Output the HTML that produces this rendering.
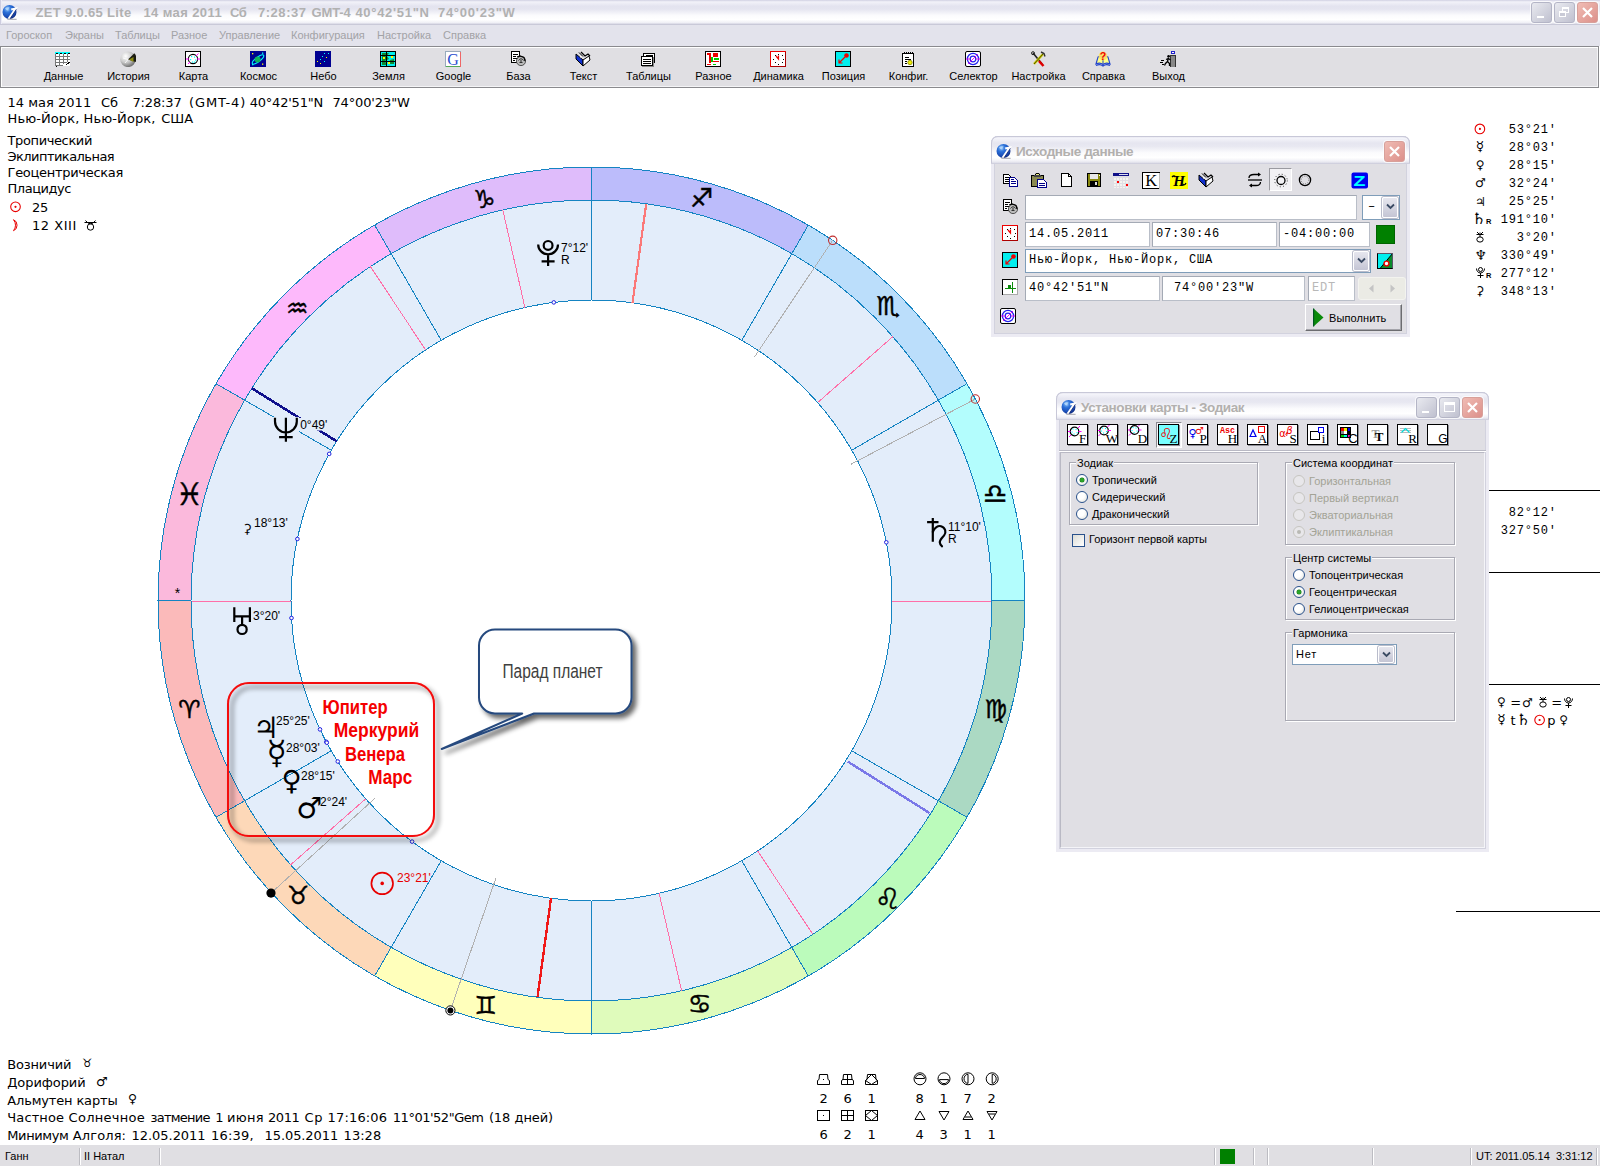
<!DOCTYPE html><html lang="ru"><head><meta charset="utf-8"><title>ZET 9.0.65 Lite</title><style>*{box-sizing:border-box;margin:0;padding:0}
html,body{width:1600px;height:1166px;overflow:hidden;background:#fff}
body{position:relative;font-family:"Liberation Sans","DejaVu Sans",sans-serif;font-size:11px;color:#000}
#title{position:absolute;left:0;top:0;width:1600px;height:25px;box-shadow:inset 1px 0 0 #cdcde0,inset 2px 0 0 #ececf6;background:linear-gradient(#d0d0e2 0,#f2f2f9 8%,#e3e3ef 26%,#e5e5f0 38%,#fbfbfd 64%,#fff 82%,#f0f0f6 94%,#d6d6e3 100%);border-bottom:1px solid #c9c9d8}
#title .tico{position:absolute;left:0;top:0}
#title .ttxt{position:absolute;top:5px;font:bold 13px "Liberation Sans",sans-serif;color:#b1b1b1;white-space:pre;letter-spacing:0px;transform-origin:0 0}
.wb{position:absolute;top:2px;width:21px;height:21px;border:1px solid #b4b5c6;border-radius:3px;background:linear-gradient(135deg,#e9eaf0,#bfc0cf);box-shadow:0 0 0 1px rgba(255,255,255,.7)}
.wb.cl{background:linear-gradient(135deg,#f0bcb4,#dc908a);border-color:#d8a09a}
.wb.cl svg{position:absolute;left:-1px;top:-1px}
#menu{position:absolute;left:0;top:25px;width:1600px;height:21px;background:#e3e3ec}
#menu span{position:absolute;top:4px;color:#a2a2a6;font-size:11px;white-space:pre}
#tool{position:absolute;left:0;top:46px;width:1599px;height:42px;background:#e0dfe3;border:1px solid #8a8a8e;box-shadow:1px 1px 0 #fff inset,-1px -1px 0 #f4f4f6 inset}
#tool .tb{position:absolute;top:0;margin-left:-1px;width:65px;height:40px;text-align:center}
#tool .tb svg{position:absolute;left:24px;top:4px}
#tool .tb span{position:absolute;left:-10px;width:85px;top:23px;font-size:11px;text-align:center;white-space:pre}
#status{position:absolute;left:0;top:1145px;width:1600px;height:21px;background:#e0dfe3}
#status span{position:absolute;top:5px;font-size:11px;white-space:pre}
#status i{position:absolute;top:3px;width:2px;height:17px;border-left:1px solid #bcbcc2;border-right:1px solid #fff}
#status b{position:absolute;top:4px;width:15px;height:15px;background:#008000}
.vt{position:absolute;font:13px "DejaVu Sans","Liberation Sans",sans-serif;white-space:pre;line-height:16px;color:#000}
.mono{position:absolute;font:12px "Liberation Mono","DejaVu Sans Mono",monospace;letter-spacing:.8px;white-space:pre}
.sym{font-family:"DejaVu Sans",sans-serif}
#chart{position:absolute;left:0;top:88px}
.ln{left:0;width:700px;height:16px}.ln span{position:absolute;top:0;white-space:pre}
.dlg{position:absolute;background:#e0dfe4;border-radius:7px 7px 0 0}
.dlg .frame{position:absolute;left:0;top:0;right:0;bottom:0;border:3px solid #ecebf3;border-top:0;border-radius:7px 7px 0 0;box-shadow:inset 0 0 0 1px #d2d2de, 0 0 0 1px #c6c6d4 inset}
.dlg .dt{position:absolute;left:0;top:0;right:0;height:28px;border-radius:7px 7px 0 0;box-shadow:inset 0 1px 0 #c8c8d8,inset 1px 0 0 #c8c8d8,inset -1px 0 0 #c8c8d8;background:linear-gradient(#dcdce8 0,#f4f4fa 8%,#e6e6f0 26%,#e8e8f1 38%,#fbfbfd 62%,#fff 80%,#f0f0f6 93%,#dcdce8 100%);border-bottom:1px solid #d0d0de}
.dlg .dt .cap{position:absolute;left:25px;top:8px;font:bold 13.5px "Liberation Sans",sans-serif;color:#b2b0ae;white-space:pre;letter-spacing:-0.4px}
.dlg .dt .tico{position:absolute;left:3px;top:3px}
.dlg .wb{width:21px;height:21px}
.inp{position:absolute;background:#fff;border:1px solid #a4aab5;border-right-color:#b9bec8;border-bottom-color:#b9bec8;font:12px "Liberation Mono","DejaVu Sans Mono",monospace;letter-spacing:.8px;white-space:pre;padding-left:3px;color:#000;overflow:hidden}
.cbtn{position:absolute;width:16px;background:linear-gradient(#e6e6ee,#c4c5d4);border:1px solid #fff;border-radius:2px;box-shadow:0 0 0 1px #b9bccb}
.cbtn svg{position:absolute;left:3px;top:5px}
.pbtn{position:absolute;background:#e0dfe4;border:1px solid #fff;border-right-color:#6c6c70;border-bottom-color:#6c6c70;box-shadow:inset -1px -1px 0 #a4a4aa}
.ib{position:absolute;width:16px;height:16px}
.grp{position:absolute;border:1px solid #a9a9b3;box-shadow:1px 1px 0 #fff, inset 1px 1px 0 #fff}
.grp>em{position:absolute;left:6px;top:-6px;background:#e0dfe4;padding:0 1px;font-style:normal;font-size:11px;line-height:13px;white-space:pre}
.rad{position:absolute;width:12px;height:12px;border-radius:50%;border:1px solid #29518c;background:radial-gradient(circle at 35% 35%,#fff 40%,#dcdcd6)}
.rad.on::after{content:"";position:absolute;left:3px;top:3px;width:4px;height:4px;border-radius:50%;background:#2aa52a;box-shadow:0 0 0 0.5px #1a7a1a}
.rad.dis{border-color:#c6c5c0;background:#e8e7ea}
.rad.dis.on::after{background:#b9b9b4;box-shadow:none}
.lb{position:absolute;font-size:11px;line-height:13px;white-space:pre}
.lb.dis{color:#a3a396}
.tbt{position:absolute;top:32px;width:21px;height:21px;background:#fff;border:1px solid #000;box-shadow:1px 1px 0 #8f8f96}
.tbt svg{position:absolute;left:0;top:0}
.tbt.on{background:#7ff}
</style></head><body><div id="title"><svg class="tico" width="20" height="22" viewBox="0 0 20 22"><defs><radialGradient id="GLB" cx="35%" cy="28%" r="80%"><stop offset="0" stop-color="#8cc0f6"/><stop offset="0.35" stop-color="#2a6fd8"/><stop offset="0.75" stop-color="#1848b0"/><stop offset="1" stop-color="#0a2070"/></radialGradient></defs><circle cx="9.5" cy="12" r="7" fill="url(#GLB)"/><path d="M5 8.5Q7 6.5 9.5 7.5Q8 9 8.5 10.5Q6.5 11 5 8.5Z" fill="#b8dcff" opacity=".8"/><path d="M11.2 9.6L15.6 8.6L8.6 18.9" fill="none" stroke="#fff" stroke-width="2.1" stroke-linejoin="miter"/><path d="M16.4 9.3L10 18.8" stroke="#0a1a60" stroke-width="0.9" opacity=".8"/><path d="M7.4 19.3H16.6" stroke="#9a9aa4" stroke-width="0.9"/></svg><span class="ttxt" style="left:35.4px;letter-spacing:0.34px">ZET 9.0.65 Lite</span> <span class="ttxt" style="left:143.4px;letter-spacing:0.41px">14 мая 2011</span> <span class="ttxt" style="left:229.9px;letter-spacing:-0.27px">Сб</span> <span class="ttxt" style="left:257.9px;letter-spacing:0.56px">7:28:37</span> <span class="ttxt" style="left:311.4px;letter-spacing:-0.10px">GMT-4</span> <span class="ttxt" style="left:355.4px;letter-spacing:0.70px">40°42'51"N</span> <span class="ttxt" style="left:437.9px;letter-spacing:0.76px">74°00'23"W</span>
<div class="wb" style="left:1531px"><i style="position:absolute;left:5px;top:13px;width:7px;height:2px;background:#fff;border:0"></i></div>
<div class="wb" style="left:1554px"><i style="position:absolute;left:7px;top:4px;width:7px;height:6px;border:1px solid #fff;border-top-width:2px"></i><i style="position:absolute;left:4px;top:8px;width:7px;height:6px;border:1px solid #fff;border-top-width:2px;background:#c9cad6"></i></div>
<div class="wb cl" style="left:1577px"><svg width="21" height="21" viewBox="0 0 21 21"><path d="M6 6L15 15M15 6L6 15" stroke="#fff" stroke-width="2.2"/></svg></div>
</div>
<div id="menu"><span style="left:6px">Гороскоп</span> <span style="left:65px">Экраны</span> <span style="left:115px">Таблицы</span> <span style="left:171px">Разное</span> <span style="left:219px">Управление</span> <span style="left:291px">Конфигурация</span> <span style="left:377px">Настройка</span> <span style="left:443px">Справка</span></div>
<div id="tool">
<div class="tb" style="left:31px"><svg width="16" height="16" viewBox="0 0 16 16"><g shape-rendering="crispEdges"><rect x="0" y="1" width="15" height="14" fill="#fff"/><rect x="0" y="1" width="15" height="2" fill="#0ff"/><path d="M0.5 3V15M4.5 3V15M8.5 3V13M12.5 3V11M0 5.5H15M0 8.5H15M0 11.5H12M0 14.5H8" stroke="#777" fill="none"/><path d="M1 2.5H3M5 2.5H7M9 2.5H11M13 2.5H15" stroke="#000"/><path d="M11 14L13 12.5L15 11" stroke="#000" fill="none"/><rect x="1" y="15" width="1" height="1" fill="#000"/></g></svg><span>Данные</span></div>
<div class="tb" style="left:96px"><svg width="16" height="16" viewBox="0 0 16 16"><defs><radialGradient id="sph" cx="35%" cy="30%" r="75%"><stop offset="0" stop-color="#fff"/><stop offset="0.55" stop-color="#c8c8c8"/><stop offset="1" stop-color="#666"/></radialGradient></defs><circle cx="8" cy="8.3" r="7.8" fill="url(#sph)"/><path d="M8 8.5L14.4 2.3A8 8 0 0 1 15.6 11Z" fill="#1a1a10"/><path d="M9 8.5L13.5 6V11Z" fill="#8a8a10"/><path d="M3 7L8 8.5L5 12" stroke="#fff" stroke-width="0.8" fill="none"/></svg><span>История</span></div>
<div class="tb" style="left:161px"><svg width="16" height="16" viewBox="0 0 16 16"><rect x="0.5" y="0.5" width="15" height="15" fill="#fff" stroke="#000" shape-rendering="crispEdges"/><circle cx="8" cy="8" r="4.6" fill="none" stroke="#000" stroke-width="1.1"/><path d="M1 8H4M12 8H15M3 13L5 11M11 5L13.5 2.5" stroke="#f0f" stroke-width="1"/><g fill="#0ff"><rect x="6" y="5" width="1.2" height="1.2"/><rect x="9" y="5.5" width="1.2" height="1.2"/><rect x="5" y="8" width="1.2" height="1.2"/><rect x="10" y="8.5" width="1.2" height="1.2"/><rect x="7" y="10.5" width="1.2" height="1.2"/><rect x="9" y="10.5" width="1.2" height="1.2"/></g></svg><span>Карта</span></div>
<div class="tb" style="left:226px"><svg width="16" height="16" viewBox="0 0 16 16"><rect x="0" y="0" width="16" height="16" fill="#000090" shape-rendering="crispEdges"/><ellipse cx="8" cy="8.5" rx="7" ry="2.2" transform="rotate(-38 8 8.5)" fill="none" stroke="#0ff" stroke-width="1.1"/><circle cx="7.6" cy="8.6" r="3" fill="#10b060"/><g fill="#ff0"><rect x="2" y="2" width="1.3" height="1.3"/><rect x="12" y="12.5" width="1.3" height="1.3"/></g><g fill="#0ff"><rect x="12" y="1.5" width="1.3" height="1.3"/><rect x="2" y="13" width="1.3" height="1.3"/></g></svg><span>Космос</span></div>
<div class="tb" style="left:291px"><svg width="16" height="16" viewBox="0 0 16 16"><rect x="0" y="0" width="16" height="16" fill="#000090" shape-rendering="crispEdges"/><g fill="#0ff" shape-rendering="crispEdges"><rect x="9" y="2" width="1" height="1"/><rect x="13" y="2" width="1" height="1"/><rect x="7" y="5" width="1" height="1"/><rect x="5" y="8" width="1" height="1"/><rect x="9" y="10" width="1" height="1"/></g><g fill="#ff0" shape-rendering="crispEdges"><rect x="2" y="10" width="1" height="1"/><rect x="5" y="12" width="1" height="1"/><rect x="11" y="6" width="1" height="1"/></g></svg><span>Небо</span></div>
<div class="tb" style="left:356px"><svg width="16" height="16" viewBox="0 0 16 16"><rect x="0.5" y="0.5" width="15" height="15" fill="#0ee" stroke="#000" shape-rendering="crispEdges"/><path d="M2 2H9L7 5L9 8L5 10L7 14H2Z" fill="#108a30"/><path d="M10 9L14 8V13H9Z" fill="#108a30"/><path d="M1 4.5H15M1 10.5H15M6.5 1V15" stroke="#000" stroke-width="1" shape-rendering="crispEdges"/><g fill="#ff0"><rect x="3" y="6" width="2" height="2"/><rect x="8" y="11" width="2" height="2"/><rect x="11" y="5" width="2" height="2"/></g></svg><span>Земля</span></div>
<div class="tb" style="left:421px"><svg width="16" height="16" viewBox="0 0 16 16"><rect x="0.5" y="0.5" width="15" height="15" fill="#fff" stroke="#9ab" shape-rendering="crispEdges"/><path d="M0.5 15.5H15.5" stroke="#5a5" shape-rendering="crispEdges"/><path d="M15.5 0.5V15.5" stroke="#e66" shape-rendering="crispEdges"/><text x="8" y="13.5" text-anchor="middle" font-family="Liberation Serif" font-size="16" fill="#2a4fd0">G</text></svg><span>Google</span></div>
<div class="tb" style="left:486px"><svg width="16" height="16" viewBox="0 0 16 16"><g shape-rendering="crispEdges"><path d="M1.5 0.5H9.5V11.5H1.5Z" fill="#fff" stroke="#000"/><path d="M3 3H8M3 5H6M3 7H8M3 9H5" stroke="#000"/></g><circle cx="11" cy="10" r="4.6" fill="#bbb" stroke="#333" stroke-width="0.8"/><path d="M8.5 9.5Q11 6 13.5 9.5M9.5 11.5H12.5M11 9V11" stroke="#222" fill="none" stroke-width="0.9"/><path d="M7 6L10 5L14 6.5L15 10" fill="none" stroke="#000" stroke-width="1.2"/></svg><span>База</span></div>
<div class="tb" style="left:551px"><svg width="16" height="16" viewBox="0 0 16 16"><path d="M1 3L8 9L8 15L1 8Z" fill="#1030d0" stroke="#000" stroke-width="1"/><path d="M8 9L14 5L15 9L8 15Z" fill="#fff" stroke="#000" stroke-width="1"/><path d="M6 1L10 5L13 3L15 5" fill="none" stroke="#000" stroke-width="1.2"/><path d="M4 1.5L8 5.5" stroke="#000"/><rect x="5" y="5" width="1.5" height="1.5" fill="#fff"/></svg><span>Текст</span></div>
<div class="tb" style="left:616px"><svg width="16" height="16" viewBox="0 0 16 16"><g shape-rendering="crispEdges"><path d="M3.5 2.5H14.5V11.5H3.5Z" fill="#fff" stroke="#000"/><path d="M1.5 5.5H12.5V14.5H1.5Z" fill="#fff" stroke="#000"/><path d="M3 8H11M3 10H11M3 12H11" stroke="#000"/><path d="M6 4H13" stroke="#000"/><path d="M2 15.5H13.5V6" stroke="#888" fill="none"/></g></svg><span>Таблицы</span></div>
<div class="tb" style="left:681px"><svg width="16" height="16" viewBox="0 0 16 16"><g shape-rendering="crispEdges"><rect x="0.5" y="0.5" width="15" height="15" fill="#fff" stroke="#000"/><rect x="2" y="2" width="4" height="2" fill="#e00"/><rect x="4" y="4" width="2" height="8" fill="#e00"/><rect x="8" y="2" width="5" height="4" fill="#e00"/><rect x="6" y="6" width="2" height="5" fill="#0c0"/><rect x="9" y="7" width="5" height="2" fill="#0c0"/><rect x="8" y="10" width="6" height="1" fill="#e00"/><rect x="2" y="13" width="4" height="1" fill="#e00"/><rect x="8" y="13" width="3" height="1" fill="#0c0"/></g></svg><span>Разное</span></div>
<div class="tb" style="left:746px"><svg width="16" height="16" viewBox="0 0 16 16"><g shape-rendering="crispEdges"><rect x="0.5" y="0.5" width="15" height="15" fill="#fff" stroke="#e00" stroke-width="1"/><path d="M1 15.5H16M15.5 1V16" stroke="#a00"/><g fill="#000"><rect x="8" y="2.5" width="1" height="1"/><rect x="8" y="12.5" width="1" height="1"/><rect x="3" y="7.5" width="1" height="1"/><rect x="13" y="7.5" width="1" height="1"/><rect x="4.5" y="4" width="1" height="1"/><rect x="11.5" y="4" width="1" height="1"/><rect x="4.5" y="11" width="1" height="1"/><rect x="11.5" y="11" width="1" height="1"/></g></g><path d="M6 5L8.5 8V4.5" stroke="#e00" stroke-width="1.2" fill="none"/></svg><span>Динамика</span></div>
<div class="tb" style="left:811px"><svg width="16" height="16" viewBox="0 0 16 16"><rect x="0.5" y="0.5" width="15" height="15" fill="#0ee" stroke="#000" shape-rendering="crispEdges"/><circle cx="11.5" cy="4.5" r="2.3" fill="#e00"/><path d="M10 6L4 12M4 8.5V12H7.5" stroke="#e00" stroke-width="1.2" fill="none"/></svg><span>Позиция</span></div>
<div class="tb" style="left:876px"><svg width="16" height="16" viewBox="0 0 16 16"><g shape-rendering="crispEdges"><rect x="2.5" y="2.5" width="11" height="13" rx="1" fill="#fff" stroke="#000"/><path d="M4 1V3M6 1V3M8 1V3M10 1V3M12 1V3" stroke="#000"/><path d="M4.5 6H9M4.5 8H11M4.5 10H7M4.5 12H7" stroke="#000"/></g><circle cx="10" cy="11.5" r="2.2" fill="#ee0" stroke="#880" stroke-width="0.8"/></svg><span>Конфиг.</span></div>
<div class="tb" style="left:941px"><svg width="16" height="16" viewBox="0 0 16 16"><rect x="0.5" y="0.5" width="15" height="15" rx="1.5" fill="#fff" stroke="#000"/><circle cx="8" cy="8" r="5.6" fill="none" stroke="#22e" stroke-width="1.3"/><circle cx="8" cy="8" r="2.8" fill="none" stroke="#22e" stroke-width="1.2"/><path d="M1 8H5M11 8H15M3 13L13 3" stroke="#e0e" stroke-width="0.9"/></svg><span>Селектор</span></div>
<div class="tb" style="left:1006px"><svg width="16" height="16" viewBox="0 0 16 16"><path d="M3 2L12 13" stroke="#222" stroke-width="1.6"/><path d="M9 10L13.5 15" stroke="#d00" stroke-width="2.6"/><path d="M13 3L4 13" stroke="#cc0" stroke-width="2.4"/><path d="M13 3L4 13" stroke="#000" stroke-width="0.6"/><path d="M11 1L14 2.5L15 5.5" fill="none" stroke="#333" stroke-width="1.4"/><circle cx="3" cy="2.2" r="1.5" fill="none" stroke="#222"/></svg><span>Настройка</span></div>
<div class="tb" style="left:1071px"><svg width="16" height="16" viewBox="0 0 16 16"><path d="M1 13L3 6Q6 4 8 7Q10 4 13 6L15 13Q11 11 8 13.5Q5 11 1 13Z" fill="#ff8" stroke="#24c" stroke-width="1.1"/><path d="M8 7V13" stroke="#24c"/><circle cx="8" cy="5" r="4.4" fill="#ffe060" opacity="0.9"/><text x="8" y="8.8" text-anchor="middle" font-family="Liberation Sans" font-weight="bold" font-size="10.5" fill="#e00">?</text><path d="M1 14.5Q5 12.5 8 15Q11 12.5 15 14.5" fill="none" stroke="#24c" stroke-width="1.2"/></svg><span>Справка</span></div>
<div class="tb" style="left:1136px"><svg width="16" height="16" viewBox="0 0 16 16"><g shape-rendering="crispEdges"><rect x="10" y="4" width="5" height="12" fill="#888" stroke="#333"/><rect x="11" y="0.5" width="3" height="2" fill="#fff" stroke="#22c"/><path d="M1 9H4M0 11H3M2 13H4" stroke="#000"/></g><circle cx="8.6" cy="5.2" r="1.3" fill="#000"/><path d="M8.5 6.5L7.5 10.5L9.5 12.5V15M7.5 10.5L5.5 12.5L4.5 14.5M8.3 7.5L6 8.5M8.5 7.5L10.5 9" stroke="#000" stroke-width="1.3" fill="none"/></svg><span>Выход</span></div>
</div>
<div id="status">
<span style="left:5px">Ганн</span><i style="left:79px"></i><span style="left:84px">II Натал</span><i style="left:159px"></i>
<i style="left:1214px"></i><b style="left:1220px"></b><i style="left:1253px"></i><i style="left:1267px"></i><i style="left:1372px"></i><i style="left:1470px"></i><i style="left:1596px"></i>
<span style="left:1476px">UT: 2011.05.14&nbsp; 3:31:12</span>
</div>
<svg id="chart" width="1600" height="1057" viewBox="0 88 1600 1057"><g shape-rendering="crispEdges"><circle cx="591.5" cy="600.5" r="400.5" fill="#e3edfa"/>
<circle cx="591.5" cy="600.5" r="300.5" fill="#fff"/>
<path d="M158.0 600.5A433.5 433.5 0 0 0 216.1 817.2L244.7 800.8A400.5 400.5 0 0 1 191.0 600.5Z" fill="#fbbaba"/>
<path d="M216.1 817.2A433.5 433.5 0 0 0 374.7 975.9L391.2 947.3A400.5 400.5 0 0 1 244.7 800.8Z" fill="#fdd8b8"/>
<path d="M374.7 975.9A433.5 433.5 0 0 0 591.5 1034.0L591.5 1001.0A400.5 400.5 0 0 1 391.2 947.3Z" fill="#ffffbb"/>
<path d="M591.5 1034.0A433.5 433.5 0 0 0 808.2 975.9L791.7 947.3A400.5 400.5 0 0 1 591.5 1001.0Z" fill="#dffbbb"/>
<path d="M808.2 975.9A433.5 433.5 0 0 0 966.9 817.2L938.3 800.8A400.5 400.5 0 0 1 791.7 947.3Z" fill="#bbfbbb"/>
<path d="M966.9 817.2A433.5 433.5 0 0 0 1025.0 600.5L992.0 600.5A400.5 400.5 0 0 1 938.3 800.8Z" fill="#abd9c3"/>
<path d="M1025.0 600.5A433.5 433.5 0 0 0 966.9 383.7L938.3 400.2A400.5 400.5 0 0 1 992.0 600.5Z" fill="#b3fdfd"/>
<path d="M966.9 383.7A433.5 433.5 0 0 0 808.3 225.1L791.8 253.7A400.5 400.5 0 0 1 938.3 400.2Z" fill="#bbdefb"/>
<path d="M808.3 225.1A433.5 433.5 0 0 0 591.5 167.0L591.5 200.0A400.5 400.5 0 0 1 791.8 253.7Z" fill="#bcbcfb"/>
<path d="M591.5 167.0A433.5 433.5 0 0 0 374.7 225.1L391.2 253.7A400.5 400.5 0 0 1 591.5 200.0Z" fill="#dfbcfb"/>
<path d="M374.7 225.1A433.5 433.5 0 0 0 216.1 383.7L244.7 400.2A400.5 400.5 0 0 1 391.2 253.7Z" fill="#fdb9fb"/>
<path d="M216.1 383.7A433.5 433.5 0 0 0 158.0 600.5L191.0 600.5A400.5 400.5 0 0 1 244.7 400.2Z" fill="#fbb9dc"/>
<circle cx="591.5" cy="600.5" r="433.5" fill="none" stroke="#1584c2" stroke-width="1"/>
<circle cx="591.5" cy="600.5" r="400.5" fill="none" stroke="#1584c2" stroke-width="1"/>
<circle cx="591.5" cy="600.5" r="300.5" fill="none" stroke="#1584c2" stroke-width="1"/>
<line x1="191.0" y1="600.5" x2="158.0" y2="600.5" stroke="#1584c2" stroke-width="1" />
<line x1="331.3" y1="750.8" x2="216.1" y2="817.2" stroke="#1584c2" stroke-width="1" />
<line x1="441.2" y1="860.7" x2="374.7" y2="975.9" stroke="#1584c2" stroke-width="1" />
<line x1="591.5" y1="901.0" x2="591.5" y2="1034.0" stroke="#1584c2" stroke-width="1" />
<line x1="741.8" y1="860.7" x2="808.2" y2="975.9" stroke="#1584c2" stroke-width="1" />
<line x1="851.7" y1="750.8" x2="966.9" y2="817.2" stroke="#1584c2" stroke-width="1" />
<line x1="992.0" y1="600.5" x2="1025.0" y2="600.5" stroke="#1584c2" stroke-width="1" />
<line x1="851.7" y1="450.2" x2="966.9" y2="383.7" stroke="#1584c2" stroke-width="1" />
<line x1="741.8" y1="340.3" x2="808.3" y2="225.1" stroke="#1584c2" stroke-width="1" />
<line x1="591.5" y1="300.0" x2="591.5" y2="167.0" stroke="#1584c2" stroke-width="1" />
<line x1="441.2" y1="340.3" x2="374.7" y2="225.1" stroke="#1584c2" stroke-width="1" />
<line x1="331.3" y1="450.2" x2="216.1" y2="383.7" stroke="#1584c2" stroke-width="1" />
<line x1="659.1" y1="893.3" x2="681.6" y2="990.7" stroke="#ff6fa8" stroke-width="1" />
<line x1="757.6" y1="850.9" x2="812.8" y2="934.3" stroke="#ff6fa8" stroke-width="1" />
<line x1="817.6" y1="402.6" x2="892.8" y2="336.7" stroke="#ff6fa8" stroke-width="1" />
<line x1="524.9" y1="307.5" x2="502.8" y2="210.0" stroke="#ff6fa8" stroke-width="1" />
<line x1="425.6" y1="349.9" x2="370.4" y2="266.5" stroke="#ff6fa8" stroke-width="1" />
<line x1="365.7" y1="798.8" x2="290.6" y2="864.8" stroke="#ff6fa8" stroke-width="1" />
<line x1="192.0" y1="601.5" x2="291.0" y2="601.5" stroke="#ff6fa8" stroke-width="1"/>
<line x1="892.0" y1="601.5" x2="991.0" y2="601.5" stroke="#ff6fa8" stroke-width="1"/>
<line x1="551.0" y1="898.3" x2="537.5" y2="997.3" stroke="#f01818" stroke-width="2.4" />
<line x1="632.5" y1="302.8" x2="646.2" y2="203.8" stroke="#fb7878" stroke-width="2.2" />
<line x1="336.7" y1="441.3" x2="251.9" y2="388.3" stroke="#10108c" stroke-width="2.6" />
<line x1="847.6" y1="761.5" x2="929.7" y2="813.1" stroke="#7a78e8" stroke-width="2.4" />
<line x1="754.5" y1="357.0" x2="832.7" y2="240.3" stroke="#b0b0b0" stroke-width="1" />
<line x1="850.9" y1="464.3" x2="975.3" y2="399.0" stroke="#b0b0b0" stroke-width="1" />
<line x1="375.1" y1="798.1" x2="271.4" y2="892.8" stroke="#b0b0b0" stroke-width="1" />
<line x1="496.1" y1="877.5" x2="450.4" y2="1010.4" stroke="#b0b0b0" stroke-width="1" />
<circle cx="832.7" cy="240.3" r="4.2" fill="none" stroke="#c03030" stroke-width="1.1" shape-rendering="geometricPrecision"/>
<circle cx="975.3" cy="399.0" r="4.2" fill="none" stroke="#c03030" stroke-width="1.1" shape-rendering="geometricPrecision"/>
<circle cx="271.0" cy="893.1" r="4.6" fill="#000" shape-rendering="geometricPrecision"/>
<circle cx="450.4" cy="1010.4" r="4.6" fill="#fff" stroke="#000" stroke-width="1" shape-rendering="geometricPrecision"/><circle cx="450.4" cy="1010.4" r="3" fill="#000" shape-rendering="geometricPrecision"/>
<circle cx="553.8" cy="302.4" r="1.8" fill="#fff" stroke="#2020e0" stroke-width="1" shape-rendering="geometricPrecision"/>
<circle cx="329.2" cy="453.9" r="1.8" fill="#fff" stroke="#2020e0" stroke-width="1" shape-rendering="geometricPrecision"/>
<circle cx="297.4" cy="539.0" r="1.8" fill="#fff" stroke="#2020e0" stroke-width="1" shape-rendering="geometricPrecision"/>
<circle cx="291.5" cy="618.0" r="1.8" fill="#fff" stroke="#2020e0" stroke-width="1" shape-rendering="geometricPrecision"/>
<circle cx="320.0" cy="729.4" r="1.8" fill="#fff" stroke="#2020e0" stroke-width="1" shape-rendering="geometricPrecision"/>
<circle cx="326.3" cy="741.8" r="1.8" fill="#fff" stroke="#2020e0" stroke-width="1" shape-rendering="geometricPrecision"/>
<circle cx="326.8" cy="742.7" r="1.8" fill="#fff" stroke="#2020e0" stroke-width="1" shape-rendering="geometricPrecision"/>
<circle cx="337.8" cy="761.5" r="1.8" fill="#fff" stroke="#2020e0" stroke-width="1" shape-rendering="geometricPrecision"/>
<circle cx="412.1" cy="841.6" r="1.8" fill="#fff" stroke="#2020e0" stroke-width="1" shape-rendering="geometricPrecision"/>
<circle cx="886.3" cy="542.3" r="1.8" fill="#fff" stroke="#2020e0" stroke-width="1" shape-rendering="geometricPrecision"/></g><defs><filter id="sh" x="-10%" y="-10%" width="125%" height="130%"><feGaussianBlur in="SourceAlpha" stdDeviation="2.4"/><feOffset dx="3.5" dy="3.5"/><feComponentTransfer><feFuncA type="linear" slope="0.6"/></feComponentTransfer><feMerge><feMergeNode/><feMergeNode in="SourceGraphic"/></feMerge></filter></defs>
<text x="178.2" y="717.5" font-family="DejaVu Sans" font-size="24.8" fill="#000" stroke="#000" stroke-width="0.45">♈</text>
<text x="287.1" y="904.4" font-family="DejaVu Sans" font-size="24.9" fill="#000" stroke="#000" stroke-width="0.45">♉</text>
<text x="474.4" y="1013.5" font-family="DejaVu Sans" font-size="25.1" fill="#000" stroke="#000" stroke-width="0.45">♊</text>
<text x="687.7" y="1013.3" font-family="DejaVu Sans" font-size="26.5" fill="#000" stroke="#000" stroke-width="0.45">♋</text>
<text x="874.8" y="909.0" font-family="DejaVu Sans" font-size="29.1" fill="#000" stroke="#000" stroke-width="0.45">♌</text>
<text x="984.6" y="717.6" font-family="DejaVu Sans" font-size="25.3" fill="#000" stroke="#000" stroke-width="0.45">♍</text>
<text x="983.0" y="503.4" font-family="DejaVu Sans" font-size="27.3" fill="#000" stroke="#000" stroke-width="0.45">♎</text>
<text x="876.3" y="315.4" font-family="DejaVu Sans" font-size="26.1" fill="#000" stroke="#000" stroke-width="0.45">♏</text>
<text x="689.9" y="207.4" font-family="DejaVu Sans" font-size="25.9" fill="#000" stroke="#000" stroke-width="0.45">♐</text>
<text x="473.0" y="208.1" font-family="DejaVu Sans" font-size="25.1" fill="#000" stroke="#000" stroke-width="0.45">♑</text>
<text x="285.9" y="317.0" font-family="DejaVu Sans" font-size="25.1" fill="#000" stroke="#000" stroke-width="0.45">♒</text>
<text x="175.7" y="505.0" font-family="DejaVu Sans" font-size="30.6" fill="#000" stroke="#000" stroke-width="0.45">♓</text>
<text x="177.5" y="597.5" text-anchor="middle" font-family="Liberation Sans" font-size="14">*</text>
<g fill="none" stroke="#000" stroke-width="2.2"><circle cx="548.1" cy="245.4" r="4.4"/><path d="M538.2 244.4A9.9 9.9 0 0 0 558.0 244.4M548.1 254.3V265.9M541.6 261.3H554.6"/></g>
<text x="561" y="252" font-family="Liberation Sans" font-size="12" fill="#000">7°12'</text>
<text x="561" y="264.2" font-family="Liberation Sans" font-size="12" fill="#000">R</text>
<rect x="273.5" y="417" width="25.5" height="25" fill="#e3edfa"/><rect x="299" y="418" width="30" height="12.5" fill="#e3edfa"/>
<g fill="none" stroke="#000" stroke-width="2.2"><path d="M275.0 417.8V421.6A10.9 10.9 0 0 0 296.8 421.6V417.8M285.9 417.8V441.8M279.09999999999997 437.2H292.7"/></g>
<text x="300.2" y="429" font-family="Liberation Sans" font-size="12" fill="#000">0°49'</text>
<text x="242.5" y="532.5" font-family="DejaVu Sans" font-size="12.9" fill="#000" >⚳</text>
<text x="254" y="527" font-family="Liberation Sans" font-size="12" fill="#000">18°13'</text>
<g fill="none" stroke="#000" stroke-width="2.2"><path d="M234.3 607.3V621.9M249.9 607.3V621.9M234.3 616.4H249.9M242.1 616.4V624.8"/><circle cx="242.1" cy="629.4" r="4.6"/></g>
<text x="253" y="620" font-family="Liberation Sans" font-size="12" fill="#000">3°20'</text>
<text x="252.9" y="737.6" font-family="DejaVu Sans" font-size="29.3" fill="#000" >♃</text>
<text x="276" y="725" font-family="Liberation Sans" font-size="12" fill="#000">25°25'</text>
<text x="266.5" y="764.1" font-family="DejaVu Sans" font-size="33.2" fill="#000" >☿</text>
<text x="286" y="752" font-family="Liberation Sans" font-size="12" fill="#000">28°03'</text>
<text x="281.6" y="789.9" font-family="DejaVu Sans" font-size="27.6" fill="#000" >♀</text>
<text x="301" y="780" font-family="Liberation Sans" font-size="12" fill="#000">28°15'</text>
<text x="296.2" y="818.4" font-family="DejaVu Sans" font-size="29.2" fill="#000" >♂</text>
<text x="320" y="806" font-family="Liberation Sans" font-size="12" fill="#000">2°24'</text>
<circle cx="382.2" cy="883.4" r="10.8" fill="none" stroke="#e80000" stroke-width="1.7"/><circle cx="382.2" cy="883.4" r="1.8" fill="#e80000"/>
<text x="397" y="882" font-family="Liberation Sans" font-size="12" fill="#e80000">23°21'</text>
<g fill="none" stroke="#000" stroke-width="2.2" transform="translate(0 0)"><path d="M932.8 518.1V541.7M927.1 522.2H938.5"/><path d="M932.8 531.8C934.5 527.5 938 525.3 941 526.2C945.6 527.6 946.6 532.5 944 535.6C942 538 939.6 540 939.8 542.4C940 544.4 940.8 545.6 942 546.3" stroke-linecap="round"/></g>
<text x="948" y="531.2" font-family="Liberation Sans" font-size="12" fill="#000">11°10'</text>
<text x="948" y="543.4000000000001" font-family="Liberation Sans" font-size="12" fill="#000">R</text>
<rect x="228" y="683" width="206" height="153" rx="21" ry="21" fill="none" stroke="#f40808" stroke-width="2" filter="url(#sh)"/>
<text x="322.6" y="713.8" font-family="Liberation Sans" font-weight="bold" font-size="20" fill="#f40000" textLength="65" lengthAdjust="spacingAndGlyphs">Юпитер</text>
<text x="333.8" y="737.2" font-family="Liberation Sans" font-weight="bold" font-size="20" fill="#f40000" textLength="85.4" lengthAdjust="spacingAndGlyphs">Меркурий</text>
<text x="344.9" y="760.6" font-family="Liberation Sans" font-weight="bold" font-size="20" fill="#f40000" textLength="60.2" lengthAdjust="spacingAndGlyphs">Венера</text>
<text x="368.3" y="784" font-family="Liberation Sans" font-weight="bold" font-size="20" fill="#f40000" textLength="44" lengthAdjust="spacingAndGlyphs">Марс</text>
<path d="M495 629.6H615.5A16 16 0 0 1 631.5 645.6V697.5A16 16 0 0 1 615.5 713.5H534L441.7 749L522.2 713.5H495A16 16 0 0 1 479 697.5V645.6A16 16 0 0 1 495 629.6Z" fill="#fff" stroke="#264a7e" stroke-width="2" stroke-linejoin="round" filter="url(#sh)"/>
<text x="502.5" y="677.8" font-family="Liberation Sans" font-size="19.5" fill="#404040" textLength="100" lengthAdjust="spacingAndGlyphs">Парад планет</text>
<circle cx="15.5" cy="206.8" r="4.8" fill="none" stroke="#e80000" stroke-width="1.1"/><circle cx="15.5" cy="206.8" r="1.1" fill="#e80000"/>
<path d="M13.5 219.7A5.2 5.8 0 0 1 13.5 230.7A8.5 8.5 0 0 0 13.5 219.7Z" fill="none" stroke="#e80000" stroke-width="1"/>
<g fill="none" stroke="#000" stroke-width="1"><circle cx="90.5" cy="227" r="3.2"/><path d="M85.5 220.5Q88 224 90.5 223.8Q93 224 95.5 220.5M84.5 222.5H96.5"/></g>
<text x="82.0" y="1067.2" font-family="DejaVu Sans" font-size="11.6" fill="#000" >♉</text>
<text x="96.0" y="1086.1" font-family="DejaVu Sans" font-size="12.9" fill="#000" >♂</text>
<text x="128.0" y="1103.2" font-family="DejaVu Sans" font-size="12.3" fill="#000" >♀</text>
<circle cx="1479.9" cy="128.9" r="4.8" fill="none" stroke="#e80000" stroke-width="1.1"/><circle cx="1479.9" cy="128.9" r="1.1" fill="#e80000"/>
<text x="1475.8" y="150.9" font-family="DejaVu Sans" font-size="13.8" fill="#000" >☿</text>
<text x="1475.7" y="168.5" font-family="DejaVu Sans" font-size="11.7" fill="#000" >♀</text>
<text x="1474.9" y="187.3" font-family="DejaVu Sans" font-size="12.3" fill="#000" >♂</text>
<text x="1475.0" y="205.5" font-family="DejaVu Sans" font-size="12.3" fill="#000" >♃</text>
<text x="1471.9" y="223.8" font-family="DejaVu Sans" font-size="15.8" fill="#000" >♄</text>
<g fill="none" stroke="#000" stroke-width="1"><ellipse cx="1480" cy="239.5" rx="3.2" ry="2.6"/><path d="M1480 232.5V236.9M1476.5 234.5H1483.5M1477 232.0L1479 234.0M1483 232.0L1481 234.0"/></g>
<text x="1474.4" y="260.0" font-family="DejaVu Sans" font-size="13.7" fill="#000" >♆</text>
<g fill="none" stroke="#000" stroke-width="1"><circle cx="1480.5" cy="269.5" r="2"/><path d="M1476.5 268.5A4 4.5 0 0 0 1484.5 268.5M1480.5 273.0V278.0M1477.5 275.5H1483.5"/></g>
<text x="1475.5" y="295.2" font-family="DejaVu Sans" font-size="12.3" fill="#000" >⚳</text>
<text x="1486" y="224" font-family="Liberation Sans" font-weight="bold" font-size="7.5">R</text>
<text x="1486" y="278" font-family="Liberation Sans" font-weight="bold" font-size="7.5">R</text>
<text x="1497.1" y="706.3" font-family="DejaVu Sans" font-size="11.7" fill="#000" >♀</text>
<text x="1510.2" y="707" font-family="DejaVu Sans" font-size="13">=</text>
<text x="1521.9" y="707.1" font-family="DejaVu Sans" font-size="12.3" fill="#000" >♂</text>
<g fill="none" stroke="#000" stroke-width="1"><ellipse cx="1543" cy="704.5" rx="3.2" ry="2.6"/><path d="M1543 697.5V701.9M1539.5 699.5H1546.5M1540 697.0L1542 699.0M1546 697.0L1544 699.0"/></g>
<text x="1551.3" y="707" font-family="DejaVu Sans" font-size="13">=</text>
<g fill="none" stroke="#000" stroke-width="1"><circle cx="1568.5" cy="699.5" r="2"/><path d="M1564.5 698.5A4 4.5 0 0 0 1572.5 698.5M1568.5 703.0V708.0M1565.5 705.5H1571.5"/></g>
<text x="1497.3" y="724.3" font-family="DejaVu Sans" font-size="13.8" fill="#000" >☿</text>
<text x="1510.5" y="725" font-family="DejaVu Sans" font-size="13">t</text>
<text x="1516.4" y="725.2" font-family="DejaVu Sans" font-size="15.8" fill="#000" >♄</text>
<circle cx="1539.6" cy="720" r="4.8" fill="none" stroke="#e80000" stroke-width="1.1"/><circle cx="1539.6" cy="720" r="1.1" fill="#e80000"/>
<text x="1547.2" y="725" font-family="DejaVu Sans" font-size="13">p</text>
<text x="1559.2" y="724.0" font-family="DejaVu Sans" font-size="11.7" fill="#000" >♀</text>
<path d="M819.5 1074.5H827.5L828.0 1079.5L829.5 1080.5V1084.5H817.5V1080.5L819.0 1079.5Z" fill="none" stroke="#000" stroke-width="1"/>
<path d="M843.5 1074.5H851.5L852.0 1079.5L853.5 1080.5V1084.5H841.5V1080.5L843.0 1079.5Z" fill="none" stroke="#000" stroke-width="1"/>
<path d="M867.5 1074.5H875.5L876.0 1079.5L877.5 1080.5V1084.5H865.5V1080.5L867.0 1079.5Z" fill="none" stroke="#000" stroke-width="1"/>
<rect x="823" y="1079.0" width="1" height="1" fill="#000"/>
<path d="M847.5 1074.5V1084.5M842.5 1079.5H852.5" fill="none" stroke="#000" stroke-width="1"/>
<path d="M871.5 1074.5L877.5 1080.5L871.5 1084.5L865.5 1080.5Z" fill="none" stroke="#000" stroke-width="1"/>
<circle cx="920" cy="1078.8" r="6" fill="none" stroke="#000" stroke-width="1"/>
<path d="M915.5 1078.5H924.5A4.5 4 0 0 0 915.5 1078.5Z" fill="none" stroke="#000" stroke-width="1"/>
<circle cx="944" cy="1078.8" r="6" fill="none" stroke="#000" stroke-width="1"/>
<path d="M939.5 1079.6H948.5A4.5 4 0 0 1 939.5 1079.6Z" fill="none" stroke="#000" stroke-width="1"/>
<circle cx="968" cy="1078.8" r="6" fill="none" stroke="#000" stroke-width="1"/>
<path d="M968 1074.3V1083.3A4 4.5 0 0 1 968 1074.3Z" fill="none" stroke="#000" stroke-width="1"/>
<circle cx="992.2" cy="1078.8" r="6" fill="none" stroke="#000" stroke-width="1"/>
<path d="M992.2 1074.3V1083.3A4 4.5 0 0 0 992.2 1074.3Z" fill="none" stroke="#000" stroke-width="1"/>
<rect x="817.5" y="1110.5" width="12" height="10" fill="none" stroke="#000" stroke-width="1"/>
<rect x="841.5" y="1110.5" width="12" height="10" fill="none" stroke="#000" stroke-width="1"/>
<rect x="865.5" y="1110.5" width="12" height="10" fill="none" stroke="#000" stroke-width="1"/>
<rect x="823" y="1115.0" width="1" height="1" fill="#000"/>
<path d="M847.5 1110.5V1120.5M841.5 1115.5H853.5" fill="none" stroke="#000" stroke-width="1"/>
<path d="M871.5 1110.5L877.5 1115.5L871.5 1120.5L865.5 1115.5Z" fill="none" stroke="#000" stroke-width="1"/>
<path d="M920 1111.0L925 1119.5H915Z" fill="none" stroke="#000" stroke-width="1"/>
<path d="M944 1120.0L949 1111.5H939Z" fill="none" stroke="#000" stroke-width="1"/>
<path d="M968 1111.0L973 1119.5H963ZM965 1117.0H971" fill="none" stroke="#000" stroke-width="1"/>
<path d="M992 1120.0L997 1111.5H987ZM989 1114.0H995" fill="none" stroke="#000" stroke-width="1"/></svg><div class="vt ln" style="top:94.9px"><span style="left:7.5px;letter-spacing:0.02px">14 мая 2011</span> <span style="left:100.9px;letter-spacing:0.15px">Сб</span> <span style="left:132.4px;letter-spacing:-0.12px">7:28:37</span> <span style="left:189.1px;letter-spacing:0.84px">(GMT-4)</span> <span style="left:249.7px;letter-spacing:-0.21px">40°42'51"N</span> <span style="left:332.4px;letter-spacing:-0.12px">74°00'23"W</span></div>
<div class="vt ln" style="top:110.8px"><span style="left:7.5px;letter-spacing:0.10px">Нью-Йорк,</span> <span style="left:83.6px;letter-spacing:0.11px">Нью-Йорк,</span> <span style="left:161.3px;letter-spacing:-0.02px">США</span></div>
<div class="vt ln" style="top:133.1px"><span style="left:7.5px;letter-spacing:-0.38px">Тропический</span></div>
<div class="vt ln" style="top:149.2px"><span style="left:7.5px;letter-spacing:-0.55px">Эклиптикальная</span></div>
<div class="vt ln" style="top:165.3px"><span style="left:7.5px;letter-spacing:-0.30px">Геоцентрическая</span></div>
<div class="vt ln" style="top:181.2px"><span style="left:7.5px;letter-spacing:-0.46px">Плацидус</span></div>
<div class="vt ln" style="top:200.0px"><span style="left:31.9px;letter-spacing:-0.27px">25</span></div>
<div class="vt ln" style="top:218.0px"><span style="left:31.9px;letter-spacing:0.55px">12 XIII</span></div>
<div class="vt ln" style="top:1056.5px"><span style="left:7.3px;letter-spacing:-0.18px">Возничий</span></div>
<div class="vt ln" style="top:1074.5px"><span style="left:7.3px;letter-spacing:-0.09px">Дорифорий</span></div>
<div class="vt ln" style="top:1092.5px"><span style="left:7.3px;letter-spacing:-0.16px">Альмутен карты</span></div>
<div class="vt ln" style="top:1110.0px"><span style="left:7.3px;letter-spacing:0.11px">Частное</span> <span style="left:68.6px;letter-spacing:0.27px">Солнечное</span> <span style="left:150.5px;letter-spacing:-0.74px">затмение</span> <span style="left:215.3px;letter-spacing:-1.87px">1</span> <span style="left:227.1px;letter-spacing:0.22px">июня</span> <span style="left:268.1px;letter-spacing:-0.50px">2011</span> <span style="left:304.4px;letter-spacing:0.69px">Ср</span> <span style="left:327.6px;letter-spacing:0.15px">17:16:06</span> <span style="left:392.8px;letter-spacing:-0.48px">11°01'52"Gem</span> <span style="left:488.9px;letter-spacing:-0.14px">(18</span> <span style="left:514.6px;letter-spacing:-0.14px">дней)</span></div>
<div class="vt ln" style="top:1127.5px"><span style="left:7.3px;letter-spacing:-0.40px">Минимум</span> <span style="left:72.8px;letter-spacing:0.11px">Алголя:</span> <span style="left:131.6px;letter-spacing:-0.05px">12.05.2011</span> <span style="left:211.1px;letter-spacing:0.17px">16:39,</span> <span style="left:264.5px;letter-spacing:-0.08px">15.05.2011</span> <span style="left:343.6px;letter-spacing:0.03px">13:28</span></div>
<div class="vt ln" style="top:1090.5px"><span style="left:819.5px;letter-spacing:0.53px">2</span></div>
<div class="vt ln" style="top:1090.5px"><span style="left:843.5px;letter-spacing:0.53px">6</span></div>
<div class="vt ln" style="top:1090.5px"><span style="left:867.5px;letter-spacing:0.53px">1</span></div>
<div class="vt ln" style="top:1090.5px"><span style="left:915.5px;letter-spacing:0.53px">8</span></div>
<div class="vt ln" style="top:1090.5px"><span style="left:939.5px;letter-spacing:0.53px">1</span></div>
<div class="vt ln" style="top:1090.5px"><span style="left:963.5px;letter-spacing:0.53px">7</span></div>
<div class="vt ln" style="top:1090.5px"><span style="left:987.5px;letter-spacing:0.53px">2</span></div>
<div class="vt ln" style="top:1126.5px"><span style="left:819.5px;letter-spacing:0.53px">6</span></div>
<div class="vt ln" style="top:1126.5px"><span style="left:843.5px;letter-spacing:0.53px">2</span></div>
<div class="vt ln" style="top:1126.5px"><span style="left:867.5px;letter-spacing:0.53px">1</span></div>
<div class="vt ln" style="top:1126.5px"><span style="left:915.5px;letter-spacing:0.53px">4</span></div>
<div class="vt ln" style="top:1126.5px"><span style="left:939.5px;letter-spacing:0.53px">3</span></div>
<div class="vt ln" style="top:1126.5px"><span style="left:963.5px;letter-spacing:0.53px">1</span></div>
<div class="vt ln" style="top:1126.5px"><span style="left:987.5px;letter-spacing:0.53px">1</span></div>
<div class="mono" style="right:43.2px;top:122px;line-height:16px">53°21'</div>
<div class="mono" style="right:43.2px;top:140px;line-height:16px">28°03'</div>
<div class="mono" style="right:43.2px;top:158px;line-height:16px">28°15'</div>
<div class="mono" style="right:43.2px;top:176px;line-height:16px">32°24'</div>
<div class="mono" style="right:43.2px;top:194px;line-height:16px">25°25'</div>
<div class="mono" style="right:43.2px;top:212px;line-height:16px">191°10'</div>
<div class="mono" style="right:43.2px;top:230px;line-height:16px">3°20'</div>
<div class="mono" style="right:43.2px;top:248px;line-height:16px">330°49'</div>
<div class="mono" style="right:43.2px;top:266px;line-height:16px">277°12'</div>
<div class="mono" style="right:43.2px;top:284px;line-height:16px">348°13'</div>
<div class="mono" style="right:43.2px;top:505px;line-height:16px">82°12'</div>
<div class="mono" style="right:43.2px;top:523px;line-height:16px">327°50'</div>
<div style="position:absolute;left:1489px;top:490px;width:111px;height:1px;background:#000"></div>
<div style="position:absolute;left:1489px;top:572px;width:111px;height:1px;background:#000"></div>
<div style="position:absolute;left:1489px;top:684px;width:111px;height:1px;background:#000"></div>
<div style="position:absolute;left:1456px;top:911px;width:144px;height:1px;background:#000"></div><div class="dlg" style="left:991px;top:136px;width:419px;height:201px">
<div class="frame"></div>
<div class="dt"><svg class="tico" width="20" height="22" viewBox="0 0 20 22"><defs><radialGradient id="GLB2" cx="35%" cy="28%" r="80%"><stop offset="0" stop-color="#8cc0f6"/><stop offset="0.35" stop-color="#2a6fd8"/><stop offset="0.75" stop-color="#1848b0"/><stop offset="1" stop-color="#0a2070"/></radialGradient></defs><circle cx="9.5" cy="12" r="7" fill="url(#GLB2)"/><path d="M5 8.5Q7 6.5 9.5 7.5Q8 9 8.5 10.5Q6.5 11 5 8.5Z" fill="#b8dcff" opacity=".8"/><path d="M11.2 9.6L15.6 8.6L8.6 18.9" fill="none" stroke="#fff" stroke-width="2.1" stroke-linejoin="miter"/><path d="M16.4 9.3L10 18.8" stroke="#0a1a60" stroke-width="0.9" opacity=".8"/><path d="M7.4 19.3H16.6" stroke="#9a9aa4" stroke-width="0.9"/></svg><span class="cap">Исходные данные</span>
<div class="wb cl" style="left:393px;top:5px"><svg width="21" height="21" viewBox="0 0 21 21"><path d="M6 6L15 15M15 6L6 15" stroke="#fff" stroke-width="2.2"/></svg></div></div>
<div style="position:absolute;left:278px;top:32px;width:23px;height:23px;background:#f2f1f4;border:1px solid #fff;border-top-color:#9a9aa0;border-left-color:#9a9aa0"></div>
<svg class="ib" style="left:12px;top:36px;width:16px;height:16px" viewBox="0 0 16 16"><path d="M0.5 2.5H5.5L8.5 5.5V11.5H0.5Z" fill="#fff" stroke="#000" shape-rendering="crispEdges"/><path d="M2 5.5H6M2 7.5H7M2 9.5H7" stroke="#000" shape-rendering="crispEdges"/><path d="M6.5 5.5H11.5L14.5 8.5V14.5H6.5Z" fill="#fff" stroke="#00008a" shape-rendering="crispEdges"/><path d="M8 9.5H13M8 11.5H13M8 7.5H11" stroke="#00008a" shape-rendering="crispEdges"/></svg>
<svg class="ib" style="left:40px;top:36px;width:16px;height:16px" viewBox="0 0 16 16"><rect x="0.5" y="3.5" width="12" height="11" rx="1" fill="#8a8a50" stroke="#000" shape-rendering="crispEdges"/><path d="M4 3.5L5 1.5H8L9 3.5" fill="#ee8" stroke="#000"/><rect x="3" y="3" width="7" height="2" fill="#444"/><path d="M6.5 7.5H12.5L15.5 10.5V15.5H6.5Z" fill="#fff" stroke="#00008a" shape-rendering="crispEdges"/><path d="M8 11.5H14M8 13.5H14" stroke="#00008a" shape-rendering="crispEdges"/></svg>
<svg class="ib" style="left:67px;top:36px;width:16px;height:16px" viewBox="0 0 16 16"><path d="M3.5 1.5H10.5L13.5 4.5V14.5H3.5Z" fill="#fff" stroke="#000" shape-rendering="crispEdges"/><path d="M10.5 1.5V4.5H13.5" fill="none" stroke="#000" shape-rendering="crispEdges"/></svg>
<svg class="ib" style="left:95px;top:36px;width:16px;height:16px" viewBox="0 0 16 16"><g shape-rendering="crispEdges"><rect x="1.5" y="1.5" width="13" height="13" fill="#8a8a10" stroke="#000"/><rect x="4" y="2" width="8" height="5" fill="#e8e8e8"/><rect x="4" y="9" width="8" height="5" fill="#000"/><rect x="9" y="10" width="2" height="3" fill="#ddd"/><rect x="12.5" y="2.5" width="1" height="1" fill="#fff"/></g></svg>
<svg class="ib" style="left:122px;top:36px;width:16px;height:16px" viewBox="0 0 16 16"><g shape-rendering="crispEdges"><rect x="0" y="1" width="16" height="3" fill="#101088"/><rect x="6" y="2" width="9" height="1" fill="#dde"/><rect x="1" y="6" width="2" height="2" fill="#f4f4f0"/><rect x="1" y="9" width="2" height="2" fill="#f4f4f0"/><rect x="1" y="12" width="2" height="2" fill="#f4f4f0"/><rect x="1" y="15" width="2" height="2" fill="#f4f4f0"/><rect x="4" y="6" width="2" height="2" fill="#f4f4f0"/><rect x="4" y="9" width="2" height="2" fill="#f4f4f0"/><rect x="4" y="12" width="2" height="2" fill="#f4f4f0"/><rect x="4" y="15" width="2" height="2" fill="#f4f4f0"/><rect x="7" y="6" width="2" height="2" fill="#f4f4f0"/><rect x="7" y="9" width="2" height="2" fill="#f4f4f0"/><rect x="7" y="12" width="2" height="2" fill="#f4f4f0"/><rect x="7" y="15" width="2" height="2" fill="#f4f4f0"/><rect x="10" y="6" width="2" height="2" fill="#f4f4f0"/><rect x="10" y="9" width="2" height="2" fill="#f4f4f0"/><rect x="10" y="12" width="2" height="2" fill="#f4f4f0"/><rect x="10" y="15" width="2" height="2" fill="#f4f4f0"/><rect x="13" y="6" width="2" height="2" fill="#f4f4f0"/><rect x="13" y="9" width="2" height="2" fill="#f4f4f0"/><rect x="13" y="12" width="2" height="2" fill="#f4f4f0"/><rect x="13" y="15" width="2" height="2" fill="#f4f4f0"/><rect x="4" y="9" width="2" height="2" fill="#f00"/><rect x="13" y="12" width="2" height="2" fill="#f00"/></g></svg>
<svg class="ib" style="left:151px;top:36px;width:18px;height:17px" viewBox="0 0 18 17"><rect x="0.5" y="0.5" width="17" height="16" fill="#fff" stroke="#000" shape-rendering="crispEdges"/><path d="M1 17.5H18M17.5 1V17" stroke="#bbb" shape-rendering="crispEdges"/><text x="9.2" y="14.2" text-anchor="middle" font-family="Liberation Serif" font-size="16.5" fill="#000">K</text></svg>
<svg class="ib" style="left:179px;top:36px;width:18px;height:17px" viewBox="0 0 18 17"><rect x="0" y="0" width="18" height="17" fill="#ff0" shape-rendering="crispEdges"/><text x="9" y="13.5" text-anchor="middle" font-family="Liberation Serif" font-style="italic" font-weight="bold" font-size="15" fill="#000">H</text><path d="M2 5Q4 3 5.5 5M12.5 12Q14.5 14 16 11" fill="none" stroke="#000" stroke-width="1.3"/></svg>
<svg class="ib" style="left:207px;top:36px;width:16px;height:16px" viewBox="0 0 16 16"><path d="M1 3L8 9L8 15L1 8Z" fill="#1030d0" stroke="#000" stroke-width="1"/><path d="M8 9L14 5L15 9L8 15Z" fill="#fff" stroke="#000" stroke-width="1"/><path d="M6 1L10 5L13 3L15 5" fill="none" stroke="#000" stroke-width="1.2"/><path d="M4 1.5L8 5.5" stroke="#000"/><rect x="5" y="5" width="1.5" height="1.5" fill="#fff"/></svg>
<svg class="ib" style="left:256px;top:36px;width:16px;height:16px" viewBox="0 0 16 16"><path d="M2 6Q2 2.5 7 2.5H12.5M13.5 10Q13.5 13.5 9 13.5H3" fill="none" stroke="#000" stroke-width="1.3"/><path d="M1 8H15" stroke="#000" stroke-width="1.3"/><path d="M11 0.5L14 2.5L11 4.5ZM5 11.5L2 13.5L5 15.5Z" fill="#000"/></svg>
<svg class="ib" style="left:282px;top:36px;width:16px;height:16px" viewBox="0 0 16 16"><circle cx="8" cy="8.5" r="4" fill="none" stroke="#000" stroke-width="1.3"/><circle cx="8" cy="8.5" r="6.3" fill="none" stroke="#333" stroke-width="1" stroke-dasharray="1 2.3"/></svg>
<svg class="ib" style="left:306px;top:36px;width:16px;height:16px" viewBox="0 0 16 16"><circle cx="8" cy="8" r="5.6" fill="#e0dfe4" stroke="#000" stroke-width="1.3"/><circle cx="8" cy="8" r="3.8" fill="none" stroke="#777" stroke-width="1" stroke-dasharray="1 1.4"/></svg>
<svg class="ib" style="left:360px;top:36px;width:18px;height:17px" viewBox="0 0 18 17"><rect x="0.5" y="0.5" width="16.5" height="16" rx="2" fill="#0000f0"/><text x="2.6" y="13.6" font-family="Liberation Sans" font-weight="bold" font-size="15" fill="#0ff" textLength="12" lengthAdjust="spacingAndGlyphs">Z</text></svg>
<svg class="ib" style="left:11px;top:63px;width:16px;height:16px" viewBox="0 0 16 16"><g shape-rendering="crispEdges"><path d="M1.5 0.5H9.5V11.5H1.5Z" fill="#fff" stroke="#000"/><path d="M3 3H8M3 5H6M3 7H8M3 9H5" stroke="#000"/></g><circle cx="11" cy="10" r="4.6" fill="#bbb" stroke="#333" stroke-width="0.8"/><path d="M8.5 9.5Q11 6 13.5 9.5M9.5 11.5H12.5M11 9V11" stroke="#222" fill="none" stroke-width="0.9"/><path d="M7 6L10 5L14 6.5L15 10" fill="none" stroke="#000" stroke-width="1.2"/></svg>
<svg class="ib" style="left:11px;top:89px;width:16px;height:16px" viewBox="0 0 16 16"><g shape-rendering="crispEdges"><rect x="0.5" y="0.5" width="15" height="15" fill="#fff" stroke="#e00" stroke-width="1"/><path d="M1 15.5H16M15.5 1V16" stroke="#a00"/><g fill="#000"><rect x="8" y="2.5" width="1" height="1"/><rect x="8" y="12.5" width="1" height="1"/><rect x="3" y="7.5" width="1" height="1"/><rect x="13" y="7.5" width="1" height="1"/><rect x="4.5" y="4" width="1" height="1"/><rect x="11.5" y="4" width="1" height="1"/><rect x="4.5" y="11" width="1" height="1"/><rect x="11.5" y="11" width="1" height="1"/></g></g><path d="M6 5L8.5 8V4.5" stroke="#e00" stroke-width="1.2" fill="none"/></svg>
<svg class="ib" style="left:11px;top:116px;width:16px;height:16px" viewBox="0 0 16 16"><rect x="0.5" y="0.5" width="15" height="15" fill="#0ee" stroke="#000" shape-rendering="crispEdges"/><circle cx="11.5" cy="4.5" r="2.3" fill="#e00"/><path d="M10 6L4 12M4 8.5V12H7.5" stroke="#e00" stroke-width="1.2" fill="none"/></svg>
<svg class="ib" style="left:11px;top:143px;width:16px;height:16px" viewBox="0 0 16 16"><rect x="0.5" y="0.5" width="15" height="15" fill="#fff" stroke="#000" shape-rendering="crispEdges"/><path d="M15.5 1V15.5H1" fill="none" stroke="#aaa" shape-rendering="crispEdges"/><path d="M3 9.5H14M10.5 3V14" stroke="#0a8a0a" stroke-width="1.2" shape-rendering="crispEdges"/><rect x="6" y="6" width="3" height="3" fill="#0a8a0a"/></svg>
<svg class="ib" style="left:9px;top:172px;width:16px;height:16px" viewBox="0 0 16 16"><rect x="0.5" y="0.5" width="15" height="15" rx="1.5" fill="#fff" stroke="#000"/><circle cx="8" cy="8" r="5.6" fill="none" stroke="#22e" stroke-width="1.3"/><circle cx="8" cy="8" r="2.8" fill="none" stroke="#22e" stroke-width="1.2"/><path d="M1 8H5M11 8H15M3 13L13 3" stroke="#e0e" stroke-width="0.9"/></svg>
<div class="inp" style="left:34px;top:59px;width:332px;height:25px;line-height:22px;"></div>
<div class="inp" style="left:371px;top:59px;width:38px;height:25px;line-height:22px;padding-left:5px;border-color:#7f9db9">–</div>
<div class="cbtn" style="left:391px;top:61px;height:21px"><svg width="9" height="7" viewBox="0 0 9 7"><path d="M1 1.5L4.5 5L8 1.5" fill="none" stroke="#3a4a63" stroke-width="1.8"/></svg></div>
<div class="inp" style="left:34px;top:86px;width:125px;height:25px;line-height:22px;">14.05.2011</div>
<div class="inp" style="left:161px;top:86px;width:125px;height:25px;line-height:22px;">07:30:46</div>
<div class="inp" style="left:288px;top:86px;width:91px;height:25px;line-height:22px;">-04:00:00</div>
<div style="position:absolute;left:385px;top:89px;width:19px;height:19px;background:#008000;border:1px solid #006400"></div>
<div class="inp" style="left:34px;top:113px;width:346px;height:24px;line-height:21px;border-color:#7f9db9">Нью-Йорк, Нью-Йорк, США</div>
<div class="cbtn" style="left:362px;top:115px;height:20px"><svg width="9" height="7" viewBox="0 0 9 7"><path d="M1 1.5L4.5 5L8 1.5" fill="none" stroke="#3a4a63" stroke-width="1.8"/></svg></div>
<svg class="ib" style="left:386px;top:117px;width:16px;height:16px" viewBox="0 0 16 16"><rect x="0.5" y="0.5" width="15" height="15" fill="#0ee" shape-rendering="crispEdges"/><path d="M15.5 0.5V15.5H3Z" fill="#0a8a2a"/><path d="M0.5 0V16M0 15.5H16M15.5 0.5L3 15.5" fill="none" stroke="#000" stroke-width="1"/><path d="M0.5 0.5H15.5V15.5" fill="none" stroke="#556" stroke-width="1"/><circle cx="9.5" cy="10.5" r="2.4" fill="#fff" stroke="#e00" stroke-width="1.4"/></svg>
<div class="inp" style="left:34px;top:140px;width:135px;height:25px;line-height:22px;">40°42'51"N</div>
<div class="inp" style="left:171px;top:140px;width:143px;height:25px;line-height:22px;"> 74°00'23"W</div>
<div class="inp" style="left:317px;top:140px;width:47px;height:25px;line-height:22px;color:#b8b8b8">EDT</div>
<div style="position:absolute;left:367px;top:141px;width:48px;height:23px;background:#ebebe5;border:1px solid #f3f3ef;border-radius:3px"><svg width="46" height="21" viewBox="0 0 46 21"><path d="M14.5 6.5L10 10.5L14.5 14.5ZM31.5 6.5L36 10.5L31.5 14.5Z" fill="#c4c4c4"/></svg></div>
<div class="pbtn" style="left:314px;top:168px;width:97px;height:27px"><svg style="position:absolute;left:7px;top:3px" width="11" height="19" viewBox="0 0 11 19"><path d="M0.5 0.5L10.5 9.5L0.5 18.5Z" fill="#0a8a0a"/><path d="M0.6 0.5V18.5" stroke="#052" stroke-width="1.2"/></svg><span style="position:absolute;left:23px;top:7px;font-size:11px;letter-spacing:0.1px">Выполнить</span></div>
</div><div class="dlg" style="left:1056px;top:392px;width:433px;height:460px">
<div class="frame"></div>
<div class="dt"><svg class="tico" width="20" height="22" viewBox="0 0 20 22"><defs><radialGradient id="GLB3" cx="35%" cy="28%" r="80%"><stop offset="0" stop-color="#8cc0f6"/><stop offset="0.35" stop-color="#2a6fd8"/><stop offset="0.75" stop-color="#1848b0"/><stop offset="1" stop-color="#0a2070"/></radialGradient></defs><circle cx="9.5" cy="12" r="7" fill="url(#GLB3)"/><path d="M5 8.5Q7 6.5 9.5 7.5Q8 9 8.5 10.5Q6.5 11 5 8.5Z" fill="#b8dcff" opacity=".8"/><path d="M11.2 9.6L15.6 8.6L8.6 18.9" fill="none" stroke="#fff" stroke-width="2.1" stroke-linejoin="miter"/><path d="M16.4 9.3L10 18.8" stroke="#0a1a60" stroke-width="0.9" opacity=".8"/><path d="M7.4 19.3H16.6" stroke="#9a9aa4" stroke-width="0.9"/></svg><span class="cap">Установки карты - Зодиак</span>
<div class="wb" style="left:360px;top:5px"><i style="position:absolute;left:5px;top:13px;width:7px;height:2px;background:#fff;border:0"></i></div>
<div class="wb" style="left:383px;top:5px"><i style="position:absolute;left:4px;top:4px;width:11px;height:10px;border:1px solid #fff;border-top-width:3px"></i></div>
<div class="wb cl" style="left:406px;top:5px"><svg width="21" height="21" viewBox="0 0 21 21"><path d="M6 6L15 15M15 6L6 15" stroke="#fff" stroke-width="2.2"/></svg></div></div>
<div class="tbt" style="left:11px"><svg width="19" height="19" viewBox="0 0 19 19"><circle cx="6.5" cy="6.5" r="4.3" fill="none" stroke="#000" stroke-width="1.2"/><path d="M-0.5 6.5H2.5M10.5 6.5H13.5M1.0 12.0L3.0 10.0M10.0 3.0L12.0 1.0" stroke="#f0f" stroke-width="1"/><g fill="#0ff"><rect x="4.5" y="3.5" width="1.1" height="1.1"/><rect x="7.5" y="4.0" width="1.1" height="1.1"/><rect x="3.5" y="6.5" width="1.1" height="1.1"/><rect x="8.5" y="7.0" width="1.1" height="1.1"/><rect x="5.5" y="8.5" width="1.1" height="1.1"/></g><text x="14.5" y="18" text-anchor="middle" font-family="Liberation Serif" font-weight="normal" font-size="13" fill="#000">F</text></svg></div>
<div class="tbt" style="left:41px"><svg width="19" height="19" viewBox="0 0 19 19"><circle cx="6" cy="5.5" r="4.3" fill="none" stroke="#000" stroke-width="1.2"/><path d="M-1 5.5H2M10 5.5H13M0.5 11.0L2.5 9.0M9.5 2.0L11.5 0.0" stroke="#f0f" stroke-width="1"/><g fill="#0ff"><rect x="4" y="2.5" width="1.1" height="1.1"/><rect x="7" y="3.0" width="1.1" height="1.1"/><rect x="3" y="5.5" width="1.1" height="1.1"/><rect x="8" y="6.0" width="1.1" height="1.1"/><rect x="5" y="7.5" width="1.1" height="1.1"/></g><text x="14" y="18" text-anchor="middle" font-family="Liberation Serif" font-weight="normal" font-size="13" fill="#000">W</text></svg></div>
<div class="tbt" style="left:71px"><svg width="19" height="19" viewBox="0 0 19 19"><circle cx="6.5" cy="5" r="4.3" fill="none" stroke="#000" stroke-width="1.2"/><path d="M-0.5 5H2.5M10.5 5H13.5M1.0 10.5L3.0 8.5M10.0 1.5L12.0 -0.5" stroke="#f0f" stroke-width="1"/><g fill="#0ff"><rect x="4.5" y="2" width="1.1" height="1.1"/><rect x="7.5" y="2.5" width="1.1" height="1.1"/><rect x="3.5" y="5" width="1.1" height="1.1"/><rect x="8.5" y="5.5" width="1.1" height="1.1"/><rect x="5.5" y="7" width="1.1" height="1.1"/></g><text x="14.5" y="18" text-anchor="middle" font-family="Liberation Serif" font-weight="normal" font-size="13" fill="#000">D</text></svg></div>
<div style="position:absolute;left:100px;top:30px;width:26px;height:26px;background:#f4f4f7;border:1px solid #8a8a90;border-right-color:#fff;border-bottom-color:#fff"></div>
<div class="tbt on" style="left:102px"><svg width="19" height="19" viewBox="0 0 19 19"><text x="7" y="13.5" text-anchor="middle" font-family="DejaVu Sans" font-size="15" fill="#e00">♌</text><text x="14.5" y="18" text-anchor="middle" font-family="Liberation Serif" font-weight="normal" font-size="13" fill="#000">Z</text></svg></div>
<div class="tbt" style="left:131px"><svg width="19" height="19" viewBox="0 0 19 19"><text x="4.5" y="11.5" text-anchor="middle" font-family="DejaVu Sans" font-size="11" fill="#00e">♀</text><text x="11.5" y="8.5" text-anchor="middle" font-family="DejaVu Sans" font-size="10" fill="#e00">♂</text><text x="15" y="18" text-anchor="middle" font-family="Liberation Serif" font-weight="normal" font-size="13" fill="#000">P</text></svg></div>
<div class="tbt" style="left:161px"><svg width="19" height="19" viewBox="0 0 19 19"><text x="9.5" y="8" text-anchor="middle" font-family="Liberation Mono" font-weight="bold" font-size="9.5" fill="#e00" textLength="15" lengthAdjust="spacingAndGlyphs">Asc</text><text x="14.5" y="18" text-anchor="middle" font-family="Liberation Serif" font-weight="normal" font-size="13" fill="#000">H</text></svg></div>
<div class="tbt" style="left:191px"><svg width="19" height="19" viewBox="0 0 19 19"><path d="M2 11.5L5 5L8 11.5Z" fill="none" stroke="#00e" stroke-width="1.2"/><rect x="10.5" y="1.5" width="6" height="6" fill="none" stroke="#e00" stroke-width="1.2" shape-rendering="crispEdges"/><text x="14.5" y="18" text-anchor="middle" font-family="Liberation Serif" font-weight="normal" font-size="13" fill="#000">A</text></svg></div>
<div class="tbt" style="left:221px"><svg width="19" height="19" viewBox="0 0 19 19"><text x="4.5" y="12" text-anchor="middle" font-family="DejaVu Sans" font-size="10" fill="#e00">α</text><text x="11.5" y="8.5" text-anchor="middle" font-family="DejaVu Sans" font-style="italic" font-size="10" fill="#e00">β</text><path d="M7.5 9.5L9.5 7" stroke="#e00"/><text x="15" y="18" text-anchor="middle" font-family="Liberation Serif" font-weight="normal" font-size="13" fill="#000">S</text></svg></div>
<div class="tbt" style="left:251px"><svg width="19" height="19" viewBox="0 0 19 19"><g shape-rendering="crispEdges"><rect x="2.5" y="6.5" width="9" height="8" fill="none" stroke="#000" stroke-width="1.2"/><rect x="10.5" y="2.5" width="5" height="5" fill="#fff" stroke="#00e" stroke-width="1.2"/></g><text x="15.5" y="18" text-anchor="middle" font-family="Liberation Serif" font-weight="normal" font-size="13" fill="#000">i</text></svg></div>
<div class="tbt" style="left:281px"><svg width="19" height="19" viewBox="0 0 19 19"><g shape-rendering="crispEdges"><rect x="2" y="2" width="11" height="11" fill="#000"/><rect x="3.0" y="3.0" width="2.6" height="2.6" fill="#e00"/><rect x="6.4" y="3.0" width="2.6" height="2.6" fill="#ee0"/><rect x="9.8" y="3.0" width="2.6" height="2.6" fill="#00e"/><rect x="3.0" y="6.4" width="2.6" height="2.6" fill="#888"/><rect x="6.4" y="6.4" width="2.6" height="2.6" fill="#fff"/><rect x="9.8" y="6.4" width="2.6" height="2.6" fill="#000"/><rect x="3.0" y="9.8" width="2.6" height="2.6" fill="#0c0"/><rect x="6.4" y="9.8" width="2.6" height="2.6" fill="#0ee"/><rect x="9.8" y="9.8" width="2.6" height="2.6" fill="#e0e"/></g><text x="15" y="18" text-anchor="middle" font-family="Liberation Sans" font-weight="normal" font-size="13" fill="#000">C</text></svg></div>
<div class="tbt" style="left:311px"><svg width="19" height="19" viewBox="0 0 19 19"><text x="7.5" y="12.5" text-anchor="middle" font-family="Liberation Serif" font-weight="bold" font-size="12" fill="#999">T</text><text x="11" y="15.5" text-anchor="middle" font-family="Liberation Serif" font-weight="bold" font-size="13" fill="#000">T</text></svg></div>
<div class="tbt" style="left:341px"><svg width="19" height="19" viewBox="0 0 19 19"><path d="M2 3.5H13M2 5.5H13M2 7.5H13" stroke="#bbb" shape-rendering="crispEdges"/><path d="M3.5 7.5L7.5 3.5L11.5 7.5" fill="none" stroke="#0dd" stroke-width="1.2"/><text x="14.5" y="18" text-anchor="middle" font-family="Liberation Serif" font-weight="normal" font-size="13" fill="#000">R</text></svg></div>
<div class="tbt" style="left:371px"><svg width="19" height="19" viewBox="0 0 19 19"><text x="15" y="17.5" text-anchor="middle" font-family="Liberation Sans" font-weight="normal" font-size="12" fill="#000">G</text></svg></div>
<div style="position:absolute;left:3px;right:3px;top:58px;height:2px;border-top:1px solid #b9b9c4;border-bottom:1px solid #fff"></div>
<div style="position:absolute;left:4px;right:4px;top:60px;bottom:4px;border:1px solid #b9b9c4;border-right-color:#f4f4f8;border-bottom-color:#f4f4f8"></div>
<div class="grp" style="left:13px;top:70px;width:189px;height:63px"><em>Зодиак</em></div>
<div class="rad on" style="left:20px;top:82px"></div>
<div class="lb" style="left:36px;top:82px">Тропический</div>
<div class="rad" style="left:20px;top:99px"></div>
<div class="lb" style="left:36px;top:99px">Сидерический</div>
<div class="rad" style="left:20px;top:116px"></div>
<div class="lb" style="left:36px;top:116px">Драконический</div>
<div style="position:absolute;left:16px;top:142px;width:13px;height:13px;border:1px solid #29518c;background:linear-gradient(135deg,#dcdcd6,#fff)"></div>
<div class="lb" style="left:33px;top:141px">Горизонт первой карты</div>
<div class="grp" style="left:229px;top:70px;width:170px;height:83px"><em>Система координат</em></div>
<div class="rad dis" style="left:237px;top:83px"></div>
<div class="lb dis" style="left:253px;top:83px">Горизонтальная</div>
<div class="rad dis" style="left:237px;top:100px"></div>
<div class="lb dis" style="left:253px;top:100px">Первый вертикал</div>
<div class="rad dis" style="left:237px;top:117px"></div>
<div class="lb dis" style="left:253px;top:117px">Экваториальная</div>
<div class="rad on dis" style="left:237px;top:134px"></div>
<div class="lb dis" style="left:253px;top:134px">Эклиптикальная</div>
<div class="grp" style="left:229px;top:165px;width:170px;height:63px"><em>Центр системы</em></div>
<div class="rad" style="left:237px;top:177px"></div>
<div class="lb" style="left:253px;top:177px">Топоцентрическая</div>
<div class="rad on" style="left:237px;top:194px"></div>
<div class="lb" style="left:253px;top:194px">Геоцентрическая</div>
<div class="rad" style="left:237px;top:211px"></div>
<div class="lb" style="left:253px;top:211px">Гелиоцентрическая</div>
<div class="grp" style="left:229px;top:240px;width:170px;height:89px"><em>Гармоника</em></div>
<div class="inp" style="left:236px;top:252px;width:105px;height:21px;line-height:18px;font:11px 'Liberation Sans',sans-serif;line-height:18px;border-color:#7f9db9;box-shadow:none">Нет</div>
<div class="cbtn" style="left:322px;top:254px;height:17px"><svg width="9" height="7" viewBox="0 0 9 7" style="top:4px"><path d="M1 1.5L4.5 5L8 1.5" fill="none" stroke="#3a4a63" stroke-width="1.8"/></svg></div>
</div></body></html>
